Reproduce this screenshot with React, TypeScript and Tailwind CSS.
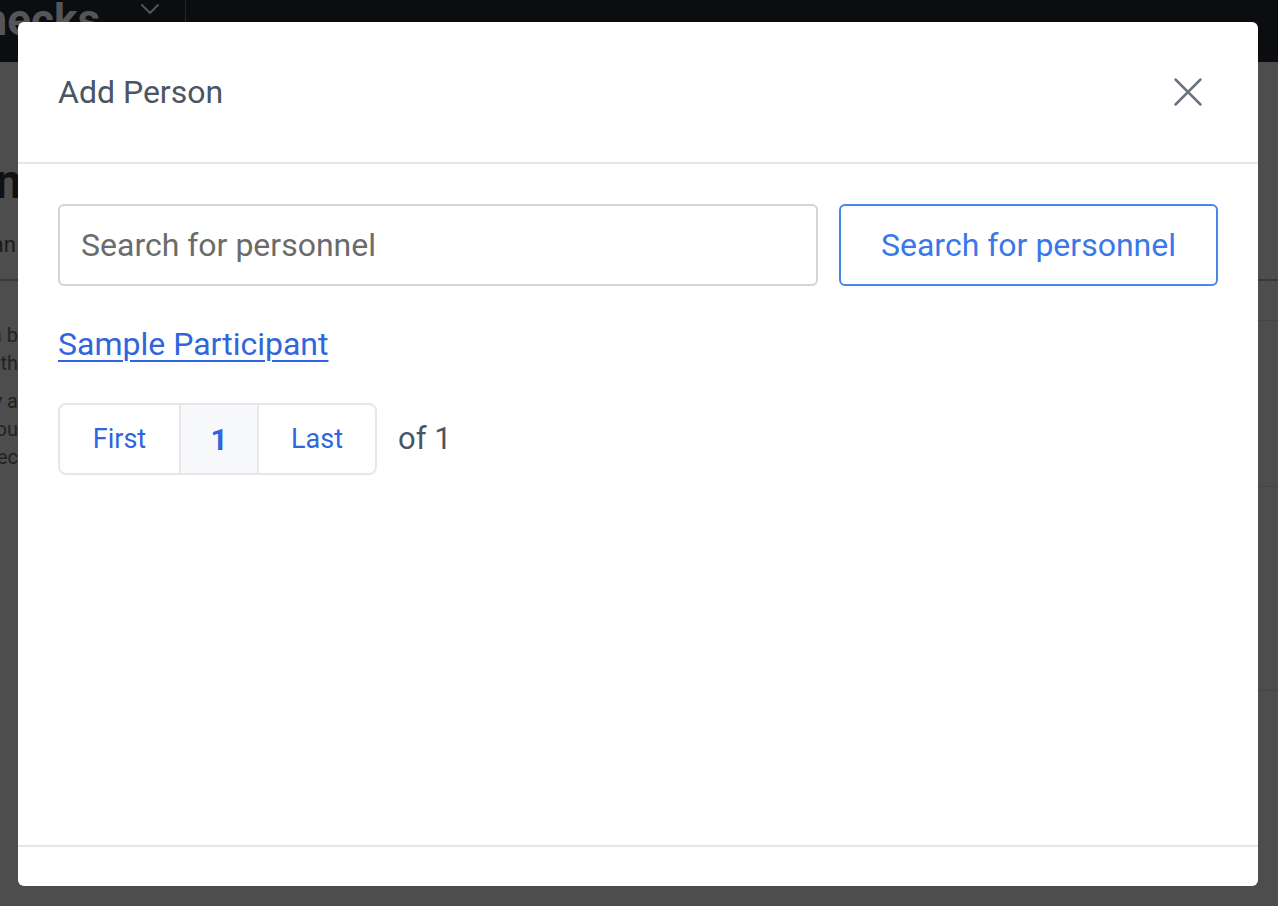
import { X, ChevronDown } from "lucide-react"

// background page, dimmed by the modal overlay
function BackPage() {
  return (
    <div className="h-[906px] w-full overflow-hidden bg-[#4d4d4d]" style={{ fontFamily: "Roboto, 'Noto Sans', sans-serif" }}>
      <div className="flex h-[62px] items-center bg-[#0c0d10]">
        <div className="flex w-[100px] justify-end whitespace-nowrap pb-[22px] text-[44px] font-bold leading-none text-[#545558]">Checks</div>
        <ChevronDown className="ml-[34px] -mt-[44px] h-8 w-8 text-[#545558]" strokeWidth={1.5} />
        <div className="ml-[19px] h-full w-px bg-[#26272b]" />
      </div>
      <div className="relative pt-[96px]">
        <div className="flex w-[22px] justify-end whitespace-nowrap text-[48px] font-bold leading-none text-[#111]">Person</div>
        <div className="mt-[22px] flex w-[16px] justify-end whitespace-nowrap text-[22px] text-[#1a1a1a]">Plan</div>
        <div className="mt-[18px] h-[2px] w-full bg-[#3a3a3a]" />
        <div className="mt-[40px] flex w-[18px] flex-col items-end whitespace-nowrap text-[20px] leading-[28px] text-[#222]">
          <p>a b</p>
          <p>ath</p>
          <p className="mt-[10px]">y a</p>
          <p>ou</p>
          <p>ec</p>
        </div>
        <div className="absolute right-0 top-[258px] h-px w-[40px] bg-[#444]" />
        <div className="absolute right-0 top-[424px] h-px w-[40px] bg-[#444]" />
        <div className="absolute right-0 top-[628px] h-px w-[40px] bg-[#444]" />
      </div>
    </div>
  )
}

export default function App() {
  return (
    <div className="relative h-[906px] w-[1278px] overflow-hidden">
      <BackPage />
      <div
        className="absolute left-[18px] top-[22px] flex h-[864px] w-[1240px] flex-col rounded-[6px] bg-white"
        style={{ fontFamily: "Roboto, 'Noto Sans', sans-serif" }}
      >
        <div className="flex h-[142px] shrink-0 items-center justify-between border-b-2 border-[#e5e7eb] px-[40px]">
          <h2 className="text-[32px] text-[#4b5563]">Add Person</h2>
          <button className="mr-[5px] text-[#6b7280]">
            <X className="h-[50px] w-[50px]" strokeWidth={1.2} />
          </button>
        </div>
        <div className="flex-1 px-[40px] pt-[40px]">
          <div className="flex gap-[21px]">
            <input
              className="h-[82px] flex-1 rounded-[6px] border-2 border-[#d1d5db] px-[21px] text-[32px] text-[#374151] placeholder:text-[#6b6b6b] outline-none"
              placeholder="Search for personnel"
            />
            <button className="h-[82px] w-[379px] rounded-[6px] border-2 border-[#4a86e8] text-[32px] text-[#3b78e7]">
              Search for personnel
            </button>
          </div>
          <a href="#" className="mt-[38px] inline-block text-[32px] leading-[40px] text-[#2f66dd] underline underline-offset-[5px] decoration-2">
            Sample Participant
          </a>
          <div className="mt-[39px] flex items-center">
            <div className="flex h-[72px] overflow-hidden rounded-[8px] border-2 border-[#e5e7eb]">
              <button className="w-[119px] text-[27px] text-[#2f66dd]">First</button>
              <button className="w-[80px] border-x-2 border-[#e5e7eb] bg-[#f7f8fa] text-[30px] font-bold text-[#2f66dd]">1</button>
              <button className="w-[116px] text-[27px] text-[#2f66dd]">Last</button>
            </div>
            <span className="ml-[21px] text-[31px] text-[#4b5563]">of 1</span>
          </div>
        </div>
        <div className="h-[41px] shrink-0 border-t-2 border-[#e5e7eb]" />
      </div>
    </div>
  )
}
